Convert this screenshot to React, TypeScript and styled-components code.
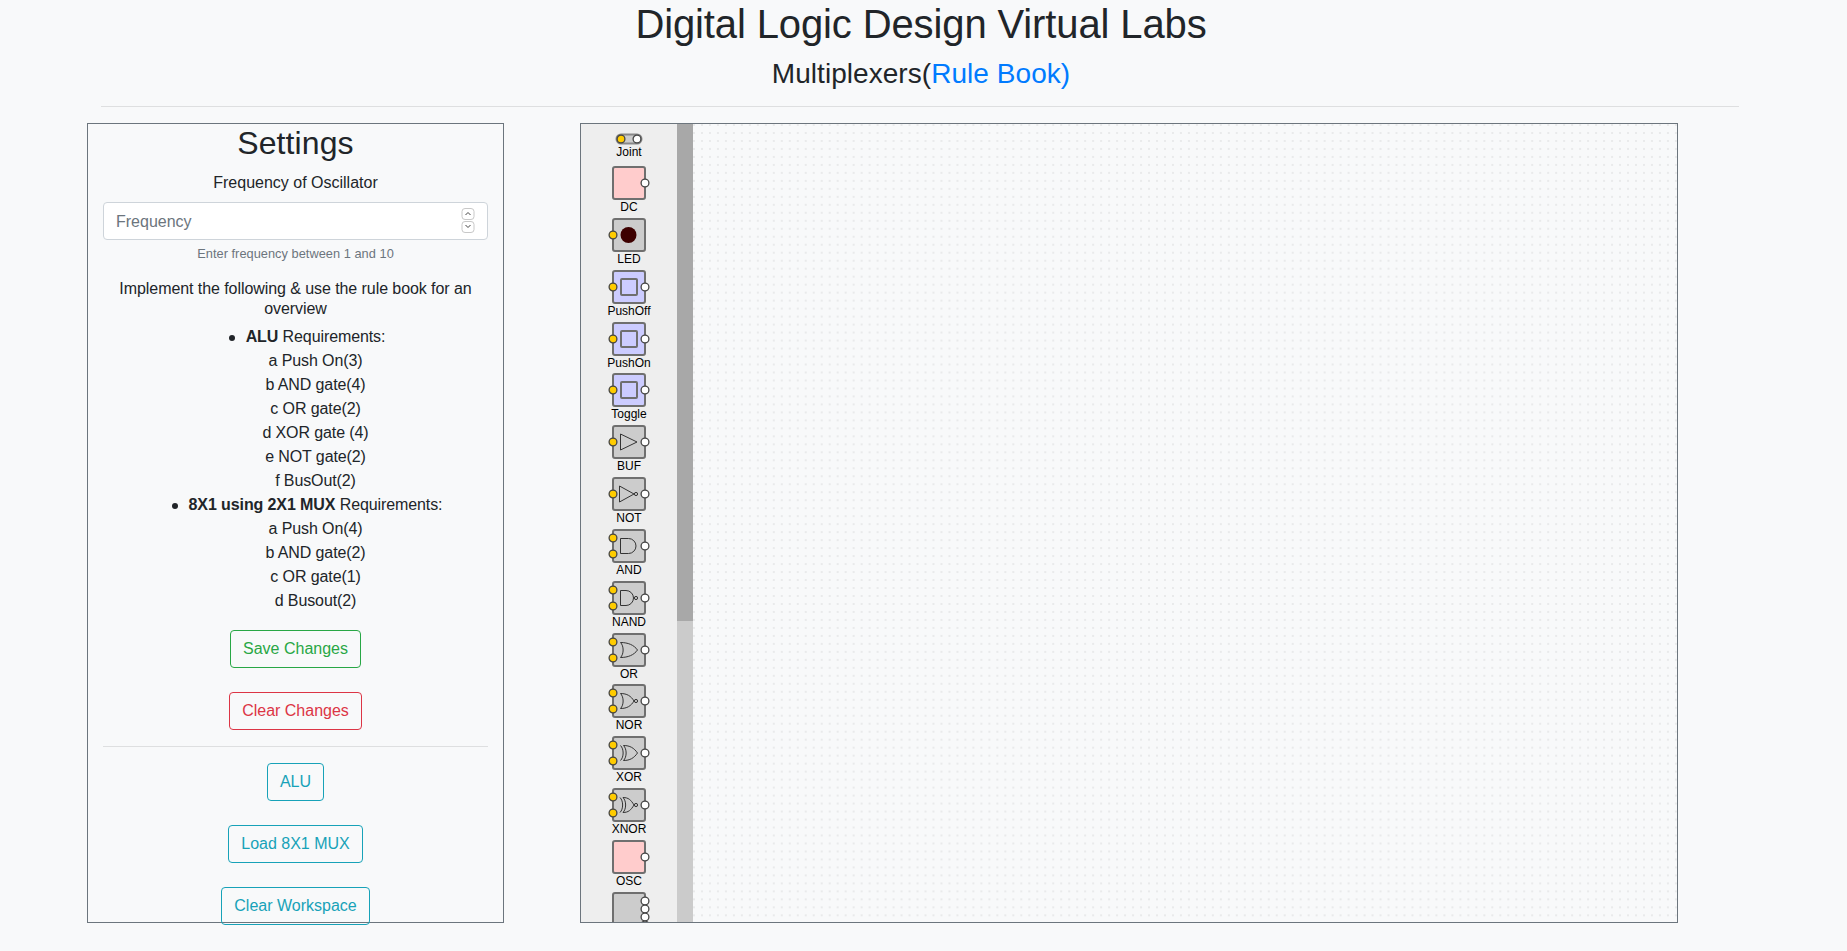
import React from 'react';
import styled, { createGlobalStyle } from 'styled-components';

const GlobalStyle = createGlobalStyle`
  html, body {
    margin: 0;
    padding: 0;
    height: 951px;
    overflow: hidden;
    background: #f8f9fa;
    color: #212529;
    font-family: "Liberation Sans", Arial, sans-serif;
    font-size: 16px;
    line-height: 1.5;
  }
  * { box-sizing: border-box; }
`;

const Page = styled.div`
  width: 1847px;
  height: 951px;
  overflow: hidden;
`;

const Header = styled.header`
  width: 1842px;
  text-align: center;
`;

const Title = styled.h1`
  margin: 0 0 8px;
  font-size: 40px;
  font-weight: 400;
  line-height: 48px;
  letter-spacing: -0.12px;
`;

const SubTitle = styled.h3`
  margin: 0;
  font-size: 28px;
  font-weight: 400;
  line-height: 34px;
  padding-top: 1px;
  height: 34px;
  letter-spacing: 0.05px;
`;

const BookLink = styled.a`
  color: #007bff;
  text-decoration: none;
`;

const Rule = styled.hr<{ $inset?: boolean }>`
  border: 0;
  border-top: 1px solid rgba(0, 0, 0, 0.1);
  margin: ${p => (p.$inset ? '16px 0' : '16px 108px 16px 101px')};
`;

const Main = styled.main`
  display: flex;
  gap: 76px;
  padding-left: 87px;
`;

const SettingsPanel = styled.section`
  width: 417px;
  height: 800px;
  border: 1px solid #6c757d;
  padding: 0 15px;
  text-align: center;
`;

const PanelTitle = styled.h2`
  margin: 0 0 8px;
  font-size: 32px;
  font-weight: 400;
  line-height: 38px;
  letter-spacing: 0.1px;
`;

const FieldLabel = styled.label`
  display: block;
  height: 24px;
  margin-bottom: 8px;
  padding-top: 1px;
  font-size: 16px;
`;

const InputWrap = styled.div`
  position: relative;
`;

const NumberInput = styled.input`
  display: block;
  width: 100%;
  height: 38px;
  padding: 7px 12px 5px;
  border: 1px solid #ced4da;
  border-radius: 4px;
  background: #fff;
  color: #495057;
  font: inherit;
  appearance: textfield;
  &::placeholder { color: #6c757d; opacity: 1; }
  &::-webkit-inner-spin-button { display: none; }
`;

const SpinIcon = styled.svg`
  position: absolute;
  top: 6px;
  right: 13px;
`;

const Hint = styled.small`
  display: block;
  margin: 4px 0 16px;
  color: #6c757d;
  font-size: 12.8px;
  line-height: 19px;
  letter-spacing: 0.03px;
`;

const Intro = styled.p`
  margin: 0 0 6px;
  line-height: 20px;
  letter-spacing: -0.07px;
`;

const Requirements = styled.ul`
  margin: 0 0 17px;
  padding: 0 0 0 40px;
  list-style: none;
  letter-spacing: -0.1px;
`;

const Requirement = styled.li`
  line-height: 24px;
`;

const BulletText = styled.span`
  position: relative;
  &::before {
    content: '';
    position: absolute;
    top: 7px;
    left: -17px;
    width: 6px;
    height: 6px;
    border-radius: 50%;
    background: #212529;
  }
`;

const SubItem = styled.div`
  line-height: 24px;
`;

const ButtonStack = styled.div`
  display: flex;
  flex-direction: column;
  align-items: center;
  gap: 24px;
`;

const OutlineButton = styled.button<{ $color: string }>`
  height: 38px;
  padding: 6px 12px;
  border: 1px solid ${p => p.$color};
  border-radius: 4px;
  background: transparent;
  color: ${p => p.$color};
  font: inherit;
`;

const Workspace = styled.section`
  display: flex;
  width: 1098px;
  height: 800px;
  border: 1px solid #6c757d;
`;

const Palette = styled.div`
  width: 96px;
  flex: none;
  overflow: hidden;
  padding-top: 9px;
  background: #eee;
`;

const PaletteItem = styled.div<{ $gap: number }>`
  display: flex;
  flex-direction: column;
  align-items: center;
  margin-bottom: ${p => p.$gap}px;
`;

const ItemIcon = styled.svg`
  display: block;
  flex: none;
`;

const ItemLabel = styled.span`
  font-size: 12px;
  line-height: 14px;
  color: #000;
`;

const ScrollTrack = styled.div`
  width: 16px;
  flex: none;
  background: #cbcbcb;
`;

const ScrollThumb = styled.div`
  height: 497px;
  background: #a8a8a8;
`;

const Canvas = styled.div`
  flex: 1;
  overflow: hidden;
`;

const DotGrid = styled.svg`
  display: block;
  width: 100%;
  height: 100%;
`;

const YELLOW = '#ffcc00';
const EDGE = '#6f6f6f';
const DARK = '#333';
const PORT_EDGE = '#444';

const InPort = ({ y }: { y: number }) => (
  <circle cx={6} cy={y} r={3.9} fill={YELLOW} stroke={PORT_EDGE} strokeWidth={1.3} />
);

const OutPort = ({ y }: { y: number }) => (
  <circle cx={38} cy={y} r={3.9} fill="#fff" stroke={PORT_EDGE} strokeWidth={1.3} />
);

const Box = ({ fill, h = 32 }: { fill: string; h?: number }) => (
  <rect x={6} y={1} width={32} height={h} rx={2} fill={fill} stroke={EDGE} strokeWidth={2} />
);

const Glyph = ({ d }: { d: string }) => (
  <path d={d} fill="none" stroke={DARK} strokeWidth={1} />
);

const Bubble = ({ cx = 29 }: { cx?: number }) => (
  <circle cx={cx} cy={17} r={1.6} fill="none" stroke={DARK} strokeWidth={1} />
);

const OUTLINES = {
  and: 'M13.5 9.5H21.5A7.5 7.5 0 0 1 21.5 24.5H13.5Z',
  nand: 'M13.5 9.5H19A7.5 7.5 0 0 1 19 24.5H13.5Z',
  or: 'M13.5 9.5C17 13 17 21 13.5 24.5C21 24.5 27 22 30.5 17C27 12 21 9.5 13.5 9.5Z',
  nor: 'M13.5 9.5C17 13 17 21 13.5 24.5C20 24.5 24 22 27 17C24 12 20 9.5 13.5 9.5Z',
  xor: 'M16.5 9.5C20 13 20 21 16.5 24.5C23 24.5 27 22 30.5 17C27 12 23 9.5 16.5 9.5ZM13.5 9.5C17 13 17 21 13.5 24.5',
  xnor: 'M16 9.5C19.5 13 19.5 21 16 24.5C21.5 24.5 24 22 27 17C24 12 21.5 9.5 16 9.5ZM13 9.5C16.5 13 16.5 21 13 24.5',
};

const Gate = ({ d, bubble }: { d: string; bubble?: boolean }) => (
  <>
    <Box fill="#ccc" />
    <Glyph d={d} />
    {bubble && <Bubble />}
    <InPort y={9} />
    <InPort y={25} />
    <OutPort y={17} />
  </>
);

const Switch = () => (
  <>
    <Box fill="#ccccff" />
    <rect x={14} y={9} width={16} height={16} rx={1} fill="#ccccff" stroke={EDGE} strokeWidth={2} />
    <InPort y={17} />
    <OutPort y={17} />
  </>
);

const Source = () => (
  <>
    <Box fill="#ffcccc" />
    <OutPort y={17} />
  </>
);

const ITEMS: { label: string; icon: React.ReactNode }[] = [
  { label: 'DC', icon: <Source /> },
  {
    label: 'LED',
    icon: (
      <>
        <Box fill="#ccc" />
        <circle cx={21.5} cy={17} r={8} fill="#3d0000" />
        <InPort y={17} />
      </>
    ),
  },
  { label: 'PushOff', icon: <Switch /> },
  { label: 'PushOn', icon: <Switch /> },
  { label: 'Toggle', icon: <Switch /> },
  {
    label: 'BUF',
    icon: (
      <>
        <Box fill="#ccc" />
        <Glyph d="M13.5 9L30 17L13.5 25Z" />
        <InPort y={17} />
        <OutPort y={17} />
      </>
    ),
  },
  {
    label: 'NOT',
    icon: (
      <>
        <Box fill="#ccc" />
        <Glyph d="M12.5 9L27 17L12.5 25Z" />
        <Bubble />
        <InPort y={17} />
        <OutPort y={17} />
      </>
    ),
  },
  { label: 'AND', icon: <Gate d={OUTLINES.and} /> },
  { label: 'NAND', icon: <Gate d={OUTLINES.nand} bubble /> },
  { label: 'OR', icon: <Gate d={OUTLINES.or} /> },
  { label: 'NOR', icon: <Gate d={OUTLINES.nor} bubble /> },
  { label: 'XOR', icon: <Gate d={OUTLINES.xor} /> },
  { label: 'XNOR', icon: <Gate d={OUTLINES.xnor} bubble /> },
  { label: 'OSC', icon: <Source /> },
];

const ALU_PARTS = ['a Push On(3)', 'b AND gate(4)', 'c OR gate(2)', 'd XOR gate (4)', 'e NOT gate(2)', 'f BusOut(2)'];
const MUX_PARTS = ['a Push On(4)', 'b AND gate(2)', 'c OR gate(1)', 'd Busout(2)'];

export default function App() {
  return (
    <Page>
      <GlobalStyle />
      <Header>
        <Title>Digital Logic Design Virtual Labs</Title>
        <SubTitle>
          Multiplexers(<BookLink href="#">Rule Book)</BookLink>
        </SubTitle>
      </Header>
      <Rule />
      <Main>
        <SettingsPanel>
          <PanelTitle>Settings</PanelTitle>
          <FieldLabel htmlFor="frequency">Frequency of Oscillator</FieldLabel>
          <InputWrap>
            <NumberInput id="frequency" type="number" placeholder="Frequency" />
            <SpinIcon width={14} height={26} viewBox="0 0 14 26" fill="none">
              <rect x={1} y={0.5} width={12} height={11} rx={3} stroke="#c8c8c8" />
              <path d="M4.5 7L7 4.5L9.5 7" stroke="#444" />
              <rect x={1} y={13.5} width={12} height={11} rx={3} stroke="#c8c8c8" />
              <path d="M4.5 17L7 19.5L9.5 17" stroke="#444" />
            </SpinIcon>
          </InputWrap>
          <Hint>Enter frequency between 1 and 10</Hint>
          <Intro>Implement the following &amp; use the rule book for an overview</Intro>
          <Requirements>
            <Requirement>
              <BulletText>
                <strong>ALU</strong> Requirements:
              </BulletText>
            </Requirement>
            {ALU_PARTS.map(part => (
              <SubItem key={part}>{part}</SubItem>
            ))}
            <Requirement>
              <BulletText>
                <strong>8X1 using 2X1 MUX</strong> Requirements:
              </BulletText>
            </Requirement>
            {MUX_PARTS.map(part => (
              <SubItem key={part}>{part}</SubItem>
            ))}
          </Requirements>
          <ButtonStack>
            <OutlineButton $color="#28a745">Save Changes</OutlineButton>
            <OutlineButton $color="#dc3545">Clear Changes</OutlineButton>
          </ButtonStack>
          <Rule $inset />
          <ButtonStack>
            <OutlineButton $color="#17a2b8">ALU</OutlineButton>
            <OutlineButton $color="#17a2b8">Load 8X1 MUX</OutlineButton>
            <OutlineButton $color="#17a2b8">Clear Workspace</OutlineButton>
          </ButtonStack>
        </SettingsPanel>
        <Workspace>
          <Palette>
            <PaletteItem $gap={7}>
              <ItemIcon width={32} height={12} viewBox="0 0 32 12">
                <rect x={3.5} y={1.5} width={25} height={9} rx={4.5} fill="#ccc" stroke="#888" strokeWidth={2} />
                <circle cx={8} cy={6} r={3.9} fill={YELLOW} stroke={PORT_EDGE} strokeWidth={1.3} />
                <circle cx={24} cy={6} r={3.9} fill="#fff" stroke={PORT_EDGE} strokeWidth={1.3} />
              </ItemIcon>
              <ItemLabel>Joint</ItemLabel>
            </PaletteItem>
            {ITEMS.map(item => (
              <PaletteItem key={item.label} $gap={3.85}>
                <ItemIcon width={44} height={34} viewBox="0 0 44 34">
                  {item.icon}
                </ItemIcon>
                <ItemLabel>{item.label}</ItemLabel>
              </PaletteItem>
            ))}
            <PaletteItem $gap={0}>
              <ItemIcon width={44} height={60} viewBox="0 0 44 60">
                <Box fill="#ccc" h={58} />
                <OutPort y={9} />
                <OutPort y={17} />
                <OutPort y={25} />
                <OutPort y={33} />
              </ItemIcon>
            </PaletteItem>
          </Palette>
          <ScrollTrack>
            <ScrollThumb />
          </ScrollTrack>
          <Canvas>
            <DotGrid>
              <defs>
                <pattern id="dots" width={7.983} height={7.983} patternUnits="userSpaceOnUse">
                  <rect width={2} height={2} fill="#e9eaeb" />
                </pattern>
              </defs>
              <rect width="100%" height="100%" fill="url(#dots)" />
            </DotGrid>
          </Canvas>
        </Workspace>
      </Main>
    </Page>
  );
}
